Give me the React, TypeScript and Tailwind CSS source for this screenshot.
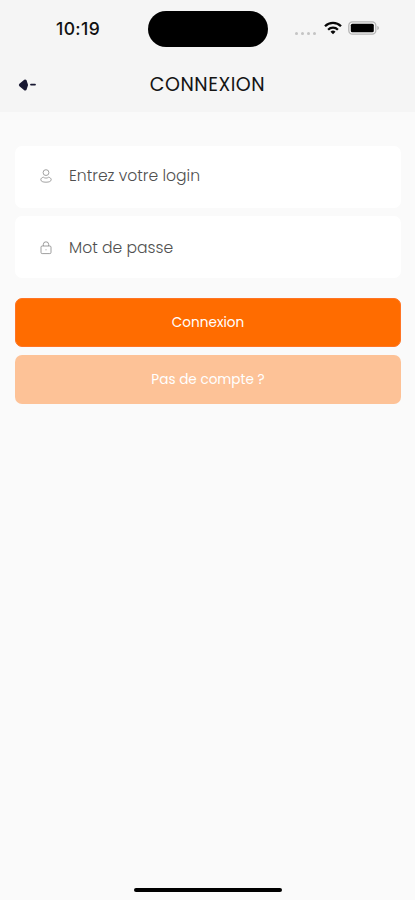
import React from 'react';

interface FieldProps {
  icon: React.ReactNode;
  type: string;
  placeholder: string;
  className?: string;
}

function UserIcon() {
  return (
    <svg width="12" height="14" viewBox="0 0 12 14" fill="none" stroke="#8c8c8c" strokeWidth="0.8">
      <circle cx="6" cy="3.6" r="2.9" />
      <path d="M3.4 8.2C1.8 8.5.8 9.5.8 10.7c0 1.7 2.2 2.5 5.2 2.5s5.2-.8 5.2-2.5c0-1.2-1-2.2-2.6-2.5-.7.6-1.6.9-2.6.9s-1.9-.3-2.6-.9Z" />
    </svg>
  );
}

function LockIcon() {
  return (
    <svg width="12" height="14" viewBox="0 0 12 14" fill="none" stroke="#858585" strokeWidth="0.8">
      <rect x="1" y="5" width="10" height="7.6" rx="1.2" />
      <path d="M3.3 5V3.5a2.7 2.7 0 0 1 5.4 0V5M6 8.3v1" />
    </svg>
  );
}

function BackIcon() {
  return (
    <svg width="18" height="14" viewBox="0 0 18 14">
      <path d="M2.4 7 7.2 3 8.5 7l-1.3 4Z" fill="#171731" stroke="#171731" strokeWidth="3" strokeLinejoin="round" />
      <path d="M13 6.6h4" stroke="#171731" strokeWidth="1.8" strokeLinecap="round" />
    </svg>
  );
}

function WifiIcon() {
  return (
    <svg width="18" height="14" viewBox="0 0 18 14" fill="none" stroke="#080808" strokeWidth="2.3">
      <path d="M1 5.2a11.4 11.4 0 0 1 16 0" />
      <path d="M4.1 8.7a7 7 0 0 1 9.8 0" />
      <path d="M9 13.3 6.5 10.8a3.5 3.5 0 0 1 5 0Z" fill="#080808" stroke="none" />
    </svg>
  );
}

function BatteryIcon() {
  return (
    <svg width="32" height="14" viewBox="0 0 32 14">
      <rect x="0.8" y="0.8" width="27" height="12.4" rx="3.6" fill="none" stroke="#b5b5b5" strokeWidth="1.3" />
      <rect x="2.8" y="2.7" width="23" height="8.6" rx="1.5" fill="#000" />
      <path d="M29.3 5v4c1-.4 1.6-1.1 1.6-2s-.6-1.6-1.6-2Z" fill="#b5b5b5" />
    </svg>
  );
}

function StatusBar() {
  return (
    <div className="flex h-[57px] items-start">
      <div className="w-[148px] pl-[56px] pt-[19px] font-['Inter'] text-[17.5px] leading-5 font-[450] tracking-[0.4px] text-[#111]">
        10:19
      </div>
      <div className="mt-[11px] h-[36px] w-[120px] rounded-full bg-black" />
      <div className="flex items-center pt-[21px] pl-[27px]">
        <div className="mt-[10px] flex gap-[3px]">
          <span className="size-[3px] rounded-full bg-[#c4c4c4]" />
          <span className="size-[3px] rounded-full bg-[#c4c4c4]" />
          <span className="size-[3px] rounded-full bg-[#c4c4c4]" />
          <span className="size-[3px] rounded-full bg-[#c4c4c4]" />
        </div>
        <div className="ml-[8px]">
          <WifiIcon />
        </div>
        <div className="ml-[6px]">
          <BatteryIcon />
        </div>
      </div>
    </div>
  );
}

function Field({ icon, type, placeholder, className = '' }: FieldProps) {
  return (
    <label className={`flex h-[62px] items-center rounded-[7px] bg-white pl-[25px] ${className}`}>
      {icon}
      <input
        type={type}
        placeholder={placeholder}
        className="ml-[17px] w-[280px] bg-transparent text-[15.6px] leading-6 font-light outline-none placeholder:text-[#505050] placeholder:opacity-100"
      />
    </label>
  );
}

export default function App() {
  return (
    <div className="flex h-[900px] w-[415px] flex-col bg-[#fafafa] font-['Poppins','Inter',sans-serif]">
      <header className="h-[112px] bg-[#f5f5f5]">
        <StatusBar />
        <div className="flex h-[56px] items-center">
          <button className="ml-[18px] w-[18px]" aria-label="Retour">
            <BackIcon />
          </button>
          <h1 className="mr-[36px] flex-1 text-center text-[19px] font-normal tracking-[0.5px] text-[#141414]">
            CONNEXION
          </h1>
        </div>
      </header>

      <main className="flex flex-1 flex-col pt-[34px] pr-[14px] pl-[15px]">
        <form className="flex flex-col gap-[8px]">
          <Field icon={<UserIcon />} type="text" placeholder="Entrez votre login" className="pb-[2px]" />
          <Field icon={<LockIcon />} type="password" placeholder="Mot de passe" className="pt-px" />
          <button
            type="button"
            className="mt-[12px] h-[49px] rounded-[7px] border border-[#ff7424] bg-[#ff6c00] pt-[2px] text-[13.6px] font-normal text-white"
          >
            Connexion
          </button>
          <button
            type="button"
            className="h-[49px] rounded-[7px] bg-[#fdc297] pt-[2px] text-[13.6px] font-normal text-white"
          >
            Pas de compte ?
          </button>
        </form>
      </main>

      {/* Home indicator */}
      <div className="mb-[8px] ml-[134px] h-[4px] w-[148px] rounded-full bg-black" />
    </div>
  );
}
